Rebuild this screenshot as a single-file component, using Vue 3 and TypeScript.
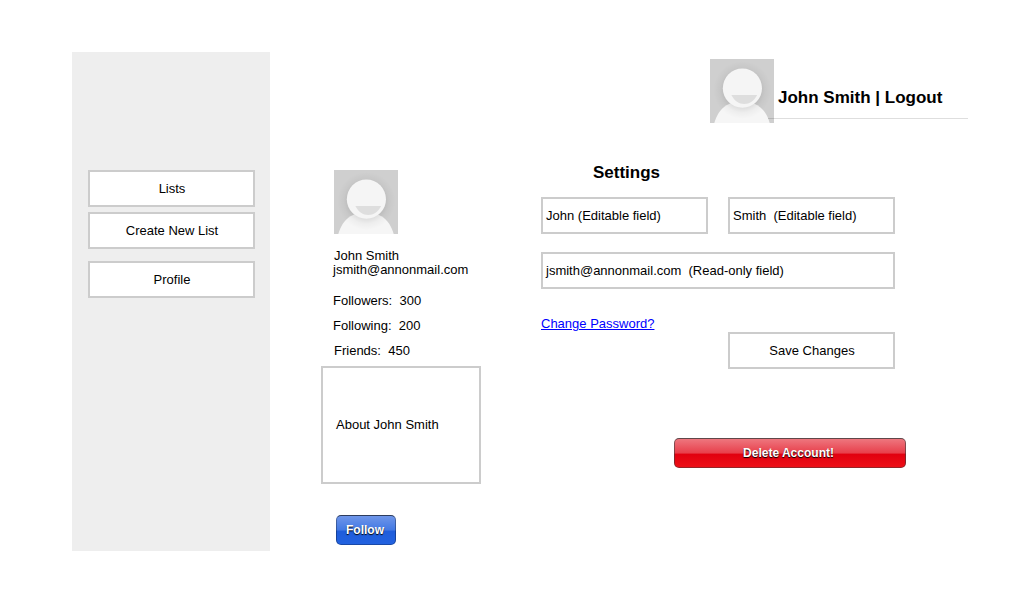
<script setup lang="ts">
interface NavItem {
  label: string
  spaced?: boolean
}

const user = {
  first: 'John',
  last: 'Smith',
  email: 'jsmith@annonmail.com',
}

const navItems: NavItem[] = [
  { label: 'Lists' },
  { label: 'Create New List' },
  { label: 'Profile', spaced: true },
]

const stats = [
  { label: 'Followers', value: 300 },
  { label: 'Following', value: 200 },
  { label: 'Friends', value: 450, inset: true },
]
</script>

<template>
  <div class="page">
    <nav class="sidebar">
      <button v-for="item in navItems" :key="item.label" class="box" :class="{ spaced: item.spaced }">
        {{ item.label }}
      </button>
    </nav>

    <div class="main">
      <header class="header">
        <svg class="avatar" viewBox="0 0 64 64">
          <defs>
            <radialGradient id="head-shadow" gradientUnits="userSpaceOnUse" cx="32.4" cy="31" r="29">
              <stop offset="0.6" stop-color="#000" stop-opacity="0.1" />
              <stop offset="0.78" stop-color="#000" stop-opacity="0.035" />
              <stop offset="1" stop-color="#000" stop-opacity="0" />
            </radialGradient>
            <symbol id="person" viewBox="0 0 64 64">
              <rect width="64" height="64" fill="#cfcfcf" />
              <path d="M4.3 64C6.5 56 10.5 50 16.5 46.2C26 40.5 38 40.5 47.5 46.2C53.5 50 57.5 56 59.7 64Z" fill="#f6f6f6" />
              <circle cx="32.4" cy="31" r="29" fill="url(#head-shadow)" />
              <circle cx="32.4" cy="29.2" r="19.6" fill="#f5f5f5" />
              <path d="M21.3 36H47.2C44 42 39.5 45 34.2 45S24.5 42 21.3 36Z" fill="#dedede" />
            </symbol>
          </defs>
          <use href="#person" />
        </svg>
        <div class="account">{{ user.first }} {{ user.last }} | Logout</div>
      </header>

      <div class="columns">
        <section class="profile">
          <svg class="avatar" viewBox="0 0 64 64"><use href="#person" /></svg>
          <div class="name">{{ user.first }} {{ user.last }}</div>
          <div class="email">{{ user.email }}</div>
          <div class="stats">
            <div v-for="stat in stats" :key="stat.label" class="stat" :class="{ inset: stat.inset }">
              {{ stat.label }}:&nbsp; {{ stat.value }}
            </div>
          </div>
          <div class="about">About {{ user.first }} {{ user.last }}</div>
          <button class="glossy follow">Follow</button>
        </section>

        <section class="settings">
          <h1>Settings</h1>
          <div class="fields">
            <div class="box field">{{ user.first }} (Editable field)</div>
            <div class="box field">{{ user.last }}&nbsp; (Editable field)</div>
            <div class="box field wide">{{ user.email }}&nbsp; (Read-only field)</div>
          </div>
          <a class="password" href="#">Change Password?</a>
          <button class="box save">Save Changes</button>
          <button class="glossy delete">Delete Account!</button>
        </section>
      </div>
    </div>
  </div>
</template>

<style>
body {
  background: #fff;
}
</style>

<style scoped>
.page {
  box-sizing: border-box;
  display: flex;
  width: 1032px;
  height: 593px;
  padding: 52px 0 0 72px;
  color: #000;
  font: 13px/15px "Liberation Sans", Arial, sans-serif;
}

.sidebar {
  box-sizing: border-box;
  display: flex;
  flex: none;
  flex-direction: column;
  gap: 5px;
  width: 198px;
  height: 499px;
  padding: 118px 15px 0 16px;
  background: #eee;
}

.box {
  box-sizing: border-box;
  display: flex;
  flex: none;
  align-items: center;
  justify-content: center;
  width: 167px;
  height: 37px;
  padding: 0 0 0 1px;
  border: 2px solid #ccc;
  border-radius: 0;
  background: #fff;
  color: #000;
  font: inherit;
}

.spaced {
  margin-top: 7px;
}

.main {
  flex: none;
  width: 647px;
  margin-left: 51px;
  padding-top: 7px;
}

.header {
  display: flex;
  height: 111px;
  padding-left: 389px;
}

.avatar {
  display: block;
  flex: none;
  width: 64px;
  height: 64px;
}

.account {
  box-sizing: border-box;
  width: 200px;
  height: 60px;
  margin-left: -6px;
  padding: 29px 0 0 10px;
  border-bottom: 1px solid rgba(0, 0, 0, 0.13);
  font-size: 17px;
  line-height: 19px;
  font-weight: bold;
  white-space: nowrap;
}

.columns {
  display: flex;
  gap: 60px;
}

.profile {
  flex: none;
  width: 160px;
}

.profile .avatar {
  margin-left: 13px;
}

.name {
  margin: 14px 0 0 13px;
}

.email {
  margin: -1px 0 0 12px;
}

.stats {
  display: flex;
  flex-direction: column;
  gap: 10px;
  margin: 16px 0 0 12px;
}

.inset {
  margin-left: 1px;
}

.about {
  box-sizing: border-box;
  display: flex;
  align-items: center;
  height: 118px;
  margin-top: 8px;
  padding: 0 0 2px 13px;
  border: 2px solid #ccc;
}

.glossy {
  box-sizing: border-box;
  display: block;
  height: 30px;
  padding: 0;
  border: 1px solid rgba(0, 0, 0, 0.3);
  border-top-color: rgba(0, 0, 0, 0.6);
  border-radius: 5px;
  background-clip: border-box;
  background-origin: border-box;
  color: #fff;
  font: bold 12px/14px "Liberation Sans", Arial, sans-serif;
  text-shadow: 0 1px 1px #000;
}

.follow {
  width: 60px;
  margin: 31px 0 0 15px;
  padding-right: 2px;
  border-color: rgba(0, 0, 0, 0.6) rgba(0, 0, 0, 0.3) rgba(0, 0, 0, 0.25);
  background-color: #2061de;
  background-image: linear-gradient(#7298ea, #4379e3 50%, #1f5ddb 54%, #2262e0);
}

.delete {
  width: 232px;
  margin: 69px 0 0 133px;
  padding-right: 3px;
  border-color: rgba(60, 60, 60, 0.8) rgba(60, 60, 60, 0.6) rgba(60, 60, 60, 0.5);
  background-color: #e8000c;
  background-image: linear-gradient(#ee7a82, #e83f4b 50%, #e1000f 54%, #ee1017);
}

.settings {
  flex: none;
  width: 365px;
}

h1 {
  margin: -7px 0 15px 52px;
  font-size: 17px;
  line-height: 19px;
}

.fields {
  display: grid;
  grid-template-columns: 167px 167px;
  gap: 18px 20px;
}

.field {
  justify-content: flex-start;
  padding-left: 3px;
}

.wide {
  grid-column: 1 / -1;
  width: 354px;
}

.password {
  display: block;
  width: max-content;
  margin-top: 27px;
  color: #00f;
}

.save {
  margin: 1px 0 0 187px;
}
</style>
